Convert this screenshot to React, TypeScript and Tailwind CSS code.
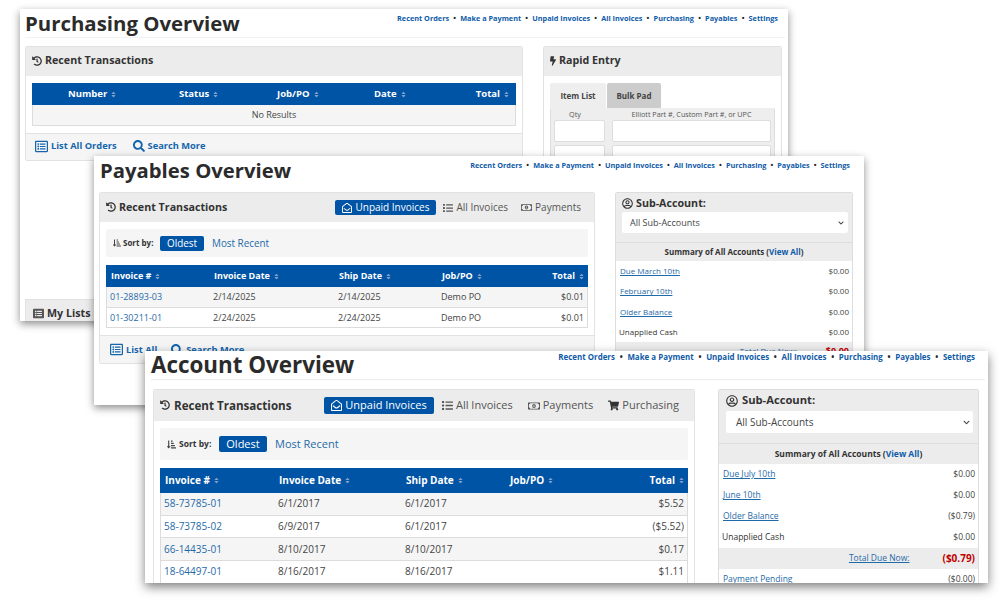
import React from "react";
import {
  FaHistory, FaBolt, FaList, FaRegEnvelopeOpen, FaRegMoneyBillAlt, FaShoppingCart,
  FaRegUserCircle, FaSearch, FaRegListAlt, FaListAlt, FaSort, FaSortAmountDownAlt, FaChevronDown,
} from "react-icons/fa";

const navItems = ["Recent Orders", "Make a Payment", "Unpaid Invoices", "All Invoices", "Purchasing", "Payables", "Settings"];

function Nav({ cls, dot }: { cls: string; dot: string }) {
  return (
    <div className={`flex items-center font-bold text-[#0f5ba8] whitespace-nowrap ${cls}`}>
      {navItems.map((n, i) => (
        <React.Fragment key={n}>
          {i > 0 && <span className={`text-[#222] ${dot}`}>•</span>}
          <span>{n}</span>
        </React.Fragment>
      ))}
    </div>
  );
}

function Sort() {
  return <FaSort className="inline-block ml-[3px] text-[#7f9fc9]" size={7} />;
}

function Row({ cols, grid, bg, textCls }: { cols: string[]; grid: string; bg: string; textCls: string }) {
  return (
    <div className={`grid items-center border-b border-[#dcdcdc] ${grid} ${bg} ${textCls} text-[#444]`}>
      <span className="text-[#1f6aa8]">{cols[0]}</span>
      <span>{cols[1]}</span>
      <span>{cols[2]}</span>
      <span>{cols[3]}</span>
      <span className="text-right">{cols[4]}</span>
    </div>
  );
}

function SumRow({ label, amount, cls }: { label: string; amount: string; cls: string }) {
  return (
    <div className={`flex items-center justify-between text-[#444] ${cls}`}>
      <span className="underline text-[#1f6aa8]">{label}</span>
      <span>{amount}</span>
    </div>
  );
}

export default function App() {
  return (
    <div className="relative w-[1000px] h-[600px] overflow-hidden bg-white font-['Open_Sans','Liberation_Sans',sans-serif]">
      {/* Purchasing window */}
      <div className="absolute left-[20px] top-[9px] w-[768px] h-[312px] overflow-hidden bg-white shadow-[0_3px_8px_rgba(0,0,0,0.45)]">
        <div className="flex justify-between h-[29px] ml-[5px] mr-[3px] pr-[7px] border-b border-[#f2f2f2]">
          <h1 className="text-[20.4px] leading-[28px] font-bold text-[#2b2b2b]">Purchasing Overview</h1>
          <Nav cls="text-[7.3px] leading-[12px] h-[18px]" dot="mx-[4.2px]" />
        </div>
        <div className="flex gap-[20px] pl-[5px] pt-[8px]">
          <div className="w-[498px]">
            <div className="border border-[#e2e2e2] rounded-[2px] overflow-hidden">
              <div className="h-[29px] pb-[2px] bg-[#ececec] flex items-center pl-[6px] gap-[3px] text-[10.7px] font-bold text-[#333]">
                <FaHistory size={10} />
                <span>Recent Transactions</span>
              </div>
              <div className="px-[6px] pt-[7px] pb-[7px] bg-white">
                <div className="grid grid-cols-[111px_98px_97px_1fr_auto] items-center h-[22px] pl-[36px] pr-[6px] bg-[#0054a6] text-white font-bold text-[9.5px]">
                  <span>Number<Sort /></span>
                  <span>Status<Sort /></span>
                  <span>Job/PO<Sort /></span>
                  <span>Date<Sort /></span>
                  <span>Total<Sort /></span>
                </div>
                <div className="h-[21px] flex items-center justify-center bg-[#f5f5f5] border border-t-0 border-[#dcdcdc] text-[9px] text-[#444]">No Results</div>
              </div>
              <div className="h-[27px] pb-[2px] bg-[#f5f5f5] border-t border-[#e2e2e2] flex items-center pl-[9px] gap-[16px] font-bold text-[9.3px] text-[#1565ad]">
                <span className="flex items-center gap-[3px]"><FaRegListAlt size={13} />List All Orders</span>
                <span className="flex items-center gap-[3px]"><FaSearch size={12} />Search More</span>
              </div>
            </div>
            <div className="mt-[138px] border border-[#e2e2e2] bg-[#ececec] h-[30px] pb-[2px] flex items-center pl-[7px] gap-[3px] text-[10.7px] font-bold text-[#333]">
              <FaListAlt size={11} className="text-[#555]" />
              <span>My Lists</span>
            </div>
          </div>
          <div className="w-[239px]">
            <div className="border border-[#e2e2e2] rounded-[2px] overflow-hidden h-[200px]">
              <div className="h-[29px] pb-[2px] bg-[#ececec] flex items-center pl-[6px] gap-[3px] text-[10.7px] font-bold text-[#333]">
                <FaBolt className="w-[6px] h-[10px]" />
                <span>Rapid Entry</span>
              </div>
              <div className="px-[6px] pt-[7px]">
                <div className="flex items-end h-[25px] gap-[1px] font-bold text-[8px] text-[#444]">
                  <div className="w-[56px] h-[25px] bg-[#eeeeee] rounded-t-[2px] flex items-center justify-center">Item List</div>
                  <div className="w-[54px] h-[25px] bg-[#cccccc] rounded-t-[2px] flex items-center justify-center">Bulk Pad</div>
                </div>
                <div className="bg-[#eeeeee] border border-t-0 border-[#dddddd] rounded-[2px] px-[3px] pb-[4px]">
                  <div className="flex gap-[7px] text-[7.2px] text-[#555] leading-[12px] text-center">
                    <span className="w-[51px] pr-[9px]">Qty</span>
                    <span className="flex-1">Elliott Part #, Custom Part #, or UPC</span>
                  </div>
                  {[0, 1].map((r) => (
                    <div key={r} className="flex gap-[7px] mb-[3px]">
                      <div className="w-[51px] h-[22px] bg-white border border-[#dddddd] rounded-[2px]" />
                      <div className="flex-1 h-[22px] bg-white border border-[#dddddd] rounded-[2px]" />
                    </div>
                  ))}
                </div>
              </div>
            </div>
          </div>
        </div>
      </div>

      {/* Payables window */}
      <div className="absolute left-[94px] top-[156px] w-[770px] h-[249px] overflow-hidden bg-white shadow-[0_3px_8px_rgba(0,0,0,0.45)]">
        <div className="flex justify-between h-[28px] pl-[6px] pr-[14px]">
          <h1 className="text-[20.3px] leading-[28px] font-bold text-[#2b2b2b]">Payables Overview</h1>
          <Nav cls="text-[7.3px] leading-[12px] h-[17px]" dot="mx-[4.1px]" />
        </div>
        <div className="flex gap-[20px] pl-[5px] pt-[8px]">
          <div className="w-[496px]">
            <div className="border border-[#e2e2e2] rounded-[2px] overflow-hidden">
              <div className="h-[29px] bg-[#ececec] flex items-center justify-between pl-[6px] pr-[13px] text-[#333]">
                <span className="flex items-center gap-[3px] text-[10.7px] font-bold"><FaHistory size={10} />Recent Transactions</span>
                <div className="flex items-center text-[10px]">
                  <span className="flex items-center gap-[3px] h-[15px] w-[101px] justify-center bg-[#0054a6] text-white rounded-[2px]"><FaRegEnvelopeOpen size={10} />Unpaid Invoices</span>
                  <span className="flex items-center gap-[3px] ml-[7px] text-[#555]"><FaList size={10} />All Invoices</span>
                  <span className="flex items-center gap-[3px] ml-[13px] text-[#555]"><FaRegMoneyBillAlt size={11} />Payments</span>
                </div>
              </div>
              <div className="px-[6px] pt-[7px] pb-[7px] bg-white">
                <div className="h-[28px] bg-[#f5f5f5] flex items-center pl-[7px] text-[9.9px] rounded-[2px]">
                  <FaSortAmountDownAlt size={8} className="text-[#444]" />
                  <span className="ml-[2px] w-[37px] font-bold text-[8px] text-[#333]">Sort by:</span>
                  <span className="h-[15px] w-[44px] flex items-center justify-center bg-[#0054a6] text-white rounded-[2px]">Oldest</span>
                  <span className="ml-[8px] text-[#1f6aa8]">Most Recent</span>
                </div>
                <div className="mt-[8px] grid grid-cols-[103px_125px_103px_1fr_auto] items-center h-[22px] pl-[5px] pr-[3px] bg-[#0054a6] text-white font-bold text-[9px]">
                  <span>Invoice #<Sort /></span>
                  <span>Invoice Date<Sort /></span>
                  <span>Ship Date<Sort /></span>
                  <span>Job/PO<Sort /></span>
                  <span>Total<Sort /></span>
                </div>
                <div className="border-x border-[#dcdcdc]">
                  <Row grid="grid-cols-[103px_125px_103px_1fr_auto] h-[21px] pl-[3px] pr-[3px]" bg="bg-[#f5f5f5]" textCls="text-[9px]" cols={["01-28893-03", "2/14/2025", "2/14/2025", "Demo PO", "$0.01"]} />
                  <Row grid="grid-cols-[103px_125px_103px_1fr_auto] h-[20px] pl-[3px] pr-[3px]" bg="bg-white" textCls="text-[9px]" cols={["01-30211-01", "2/24/2025", "2/24/2025", "Demo PO", "$0.01"]} />
                </div>
              </div>
              <div className="h-[28px] bg-[#f5f5f5] border-t border-[#e2e2e2] flex items-center pl-[10px] gap-[14px] font-bold text-[9.3px] text-[#1565ad]">
                <span className="flex items-center gap-[3px]"><FaRegListAlt size={13} />List All</span>
                <span className="flex items-center gap-[3px]"><FaSearch size={12} />Search More</span>
              </div>
            </div>
          </div>
          <div className="w-[238px]">
            <div className="border border-[#dddddd] rounded-[2px] overflow-hidden">
              <div className="bg-[#ececec] h-[50px] border-b border-[#dddddd] pl-[6px] pr-[4px]">
                <div className="h-[19px] pt-[2px] flex items-center gap-[3px] text-[10.7px] font-bold text-[#333]">
                  <FaRegUserCircle size={11} />
                  <span>Sub-Account:</span>
                </div>
                <div className="h-[21px] bg-white rounded-[2px] flex items-center justify-between pl-[8px] pr-[4px] text-[9px] text-[#444]">
                  <span>All Sub-Accounts</span>
                  <FaChevronDown size={6} />
                </div>
              </div>
              <div className="h-[18px] bg-[#ececec] flex items-center justify-center text-[8px] font-bold text-[#333]">
                <span>Summary of All Accounts (<span className="text-[#0f5ba8]">View All</span>)</span>
              </div>
              <SumRow cls="h-[20.3px] text-[8px] pl-[4px] pr-[3px]" label="Due March 10th" amount="$0.00" />
              <SumRow cls="h-[20.3px] text-[8px] pl-[4px] pr-[3px]" label="February 10th" amount="$0.00" />
              <SumRow cls="h-[20.3px] text-[8px] pl-[4px] pr-[3px]" label="Older Balance" amount="$0.00" />
              <div className="h-[20.3px] flex items-center justify-between text-[8px] text-[#333] pl-[3px] pr-[3px]">
                <span>Unapplied Cash</span>
                <span className="text-[#444]">$0.00</span>
              </div>
              <div className="h-[20px] bg-[#ececec] flex items-center justify-end pr-[3px] pb-[2px] text-[8px]">
                <span className="underline text-[#1f6aa8]">Total Due Now:</span>
                <span className="ml-[29px] text-[#c00000] font-bold text-[9px]">$0.00</span>
              </div>
            </div>
          </div>
        </div>
      </div>

      {/* Account window */}
      <div className="absolute left-[145px] top-[351px] w-[843px] h-[232px] overflow-hidden bg-white shadow-[0_4px_10px_rgba(0,0,0,0.5)]">
        <div className="flex justify-between h-[29px] ml-[6px] mr-[3px] pr-[10px] border-b border-[#ececec]">
          <h1 className="text-[22.4px] leading-[28px] font-bold text-[#2b2b2b]">Account Overview</h1>
          <Nav cls="text-[7.95px] leading-[12px] h-[12px]" dot="mx-[4.75px]" />
        </div>
        <div className="flex gap-[23px] pl-[8px] pt-[9px]">
          <div className="w-[542px]">
            <div className="border border-[#e2e2e2] rounded-[2px] overflow-hidden">
              <div className="h-[31px] bg-[#ececec] flex items-center justify-between pl-[6px] pr-[15px] text-[#333]">
                <span className="flex items-center gap-[4px] text-[11.6px] font-bold"><FaHistory size={10} />Recent Transactions</span>
                <div className="flex items-center text-[11px]">
                  <span className="flex items-center gap-[3px] h-[17px] w-[110px] justify-center bg-[#0054a6] text-white rounded-[2px]"><FaRegEnvelopeOpen size={11} />Unpaid Invoices</span>
                  <span className="flex items-center gap-[3px] ml-[8px] text-[#555]"><FaList size={11} />All Invoices</span>
                  <span className="flex items-center gap-[3px] ml-[15px] text-[#555]"><FaRegMoneyBillAlt size={12} />Payments</span>
                  <span className="flex items-center gap-[3px] ml-[15px] text-[#555]"><FaShoppingCart size={11} className="text-[#333]" />Purchasing</span>
                </div>
              </div>
              <div className="px-[6px] pt-[7px] bg-white">
                <div className="h-[32px] bg-[#f5f5f5] flex items-center pl-[7px] text-[11px] rounded-[2px]">
                  <FaSortAmountDownAlt size={9} className="text-[#444]" />
                  <span className="ml-[3px] w-[40px] font-bold text-[8.5px] text-[#333]">Sort by:</span>
                  <span className="h-[16px] w-[48px] flex items-center justify-center bg-[#0054a6] text-white rounded-[2px]">Oldest</span>
                  <span className="ml-[8px] text-[#1f6aa8]">Most Recent</span>
                </div>
                <div className="mt-[8px] grid grid-cols-[114px_127px_104px_1fr_auto] items-center h-[25px] pb-[1px] pl-[5px] pr-[3px] bg-[#0054a6] text-white font-bold text-[10px]">
                  <span>Invoice #<Sort /></span>
                  <span>Invoice Date<Sort /></span>
                  <span>Ship Date<Sort /></span>
                  <span>Job/PO<Sort /></span>
                  <span>Total<Sort /></span>
                </div>
                <div className="border-x border-[#dcdcdc]">
                  <Row grid="grid-cols-[114px_127px_104px_1fr_auto] h-[22.7px] pl-[3px] pr-[3px]" bg="bg-[#f5f5f5]" textCls="text-[10px]" cols={["58-73785-01", "6/1/2017", "6/1/2017", "", "$5.52"]} />
                  <Row grid="grid-cols-[114px_127px_104px_1fr_auto] h-[22.7px] pl-[3px] pr-[3px]" bg="bg-white" textCls="text-[10px]" cols={["58-73785-02", "6/9/2017", "6/1/2017", "", "($5.52)"]} />
                  <Row grid="grid-cols-[114px_127px_104px_1fr_auto] h-[22.7px] pl-[3px] pr-[3px]" bg="bg-[#f5f5f5]" textCls="text-[10px]" cols={["66-14435-01", "8/10/2017", "8/10/2017", "", "$0.17"]} />
                  <Row grid="grid-cols-[114px_127px_104px_1fr_auto] h-[22.7px] pl-[3px] pr-[3px]" bg="bg-white" textCls="text-[10px]" cols={["18-64497-01", "8/16/2017", "8/16/2017", "", "$1.11"]} />
                </div>
              </div>
            </div>
          </div>
          <div className="w-[261px]">
            <div className="border border-[#dddddd] rounded-[2px] overflow-hidden">
              <div className="bg-[#ececec] h-[54px] border-b border-[#dddddd] pl-[7px] pr-[5px]">
                <div className="h-[21px] flex items-center gap-[4px] text-[11.2px] font-bold text-[#333]">
                  <FaRegUserCircle size={12} />
                  <span>Sub-Account:</span>
                </div>
                <div className="h-[22px] bg-white rounded-[2px] flex items-center justify-between pl-[10px] pr-[3px] text-[10px] text-[#444]">
                  <span>All Sub-Accounts</span>
                  <FaChevronDown size={7} />
                </div>
              </div>
              <div className="h-[20px] bg-[#ececec] flex items-center justify-center text-[8.5px] font-bold text-[#333]">
                <span>Summary of All Accounts (<span className="text-[#0f5ba8]">View All</span>)</span>
              </div>
              <SumRow cls="h-[21px] text-[8.5px] pl-[4px] pr-[3px]" label="Due July 10th" amount="$0.00" />
              <SumRow cls="h-[21px] text-[8.5px] pl-[4px] pr-[3px]" label="June 10th" amount="$0.00" />
              <SumRow cls="h-[21px] text-[8.5px] pl-[4px] pr-[3px]" label="Older Balance" amount="($0.79)" />
              <div className="h-[21px] flex items-center justify-between text-[8.5px] text-[#333] pl-[3px] pr-[3px]">
                <span>Unapplied Cash</span>
                <span className="text-[#444]">$0.00</span>
              </div>
              <div className="h-[21px] bg-[#ececec] flex items-center justify-end pr-[3px] text-[8.5px]">
                <span className="underline text-[#1f6aa8]">Total Due Now:</span>
                <span className="ml-[33px] text-[#c00000] font-bold text-[10px]">($0.79)</span>
              </div>
              <SumRow cls="h-[21px] text-[8.5px] pl-[4px] pr-[3px]" label="Payment Pending" amount="($0.00)" />
            </div>
          </div>
        </div>
      </div>
    </div>
  );
}
